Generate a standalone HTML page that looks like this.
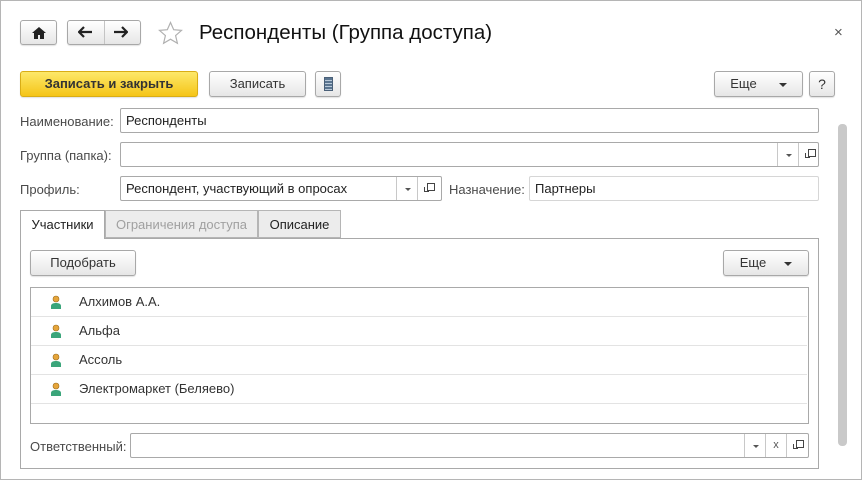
<!DOCTYPE html><html><head><meta charset="utf-8"><style>
*{box-sizing:border-box;margin:0;padding:0}
body{width:862px;height:480px;background:#fff;font-family:"Liberation Sans",Arial,sans-serif;font-size:13px;color:#333;position:relative;overflow:hidden}
.a{position:absolute}
.frame{left:0;top:0;width:862px;height:480px;border:1px solid #b5b5b5}
.btn{position:absolute;border:1px solid #a8a8a8;border-radius:3px;background:linear-gradient(#fff,#e6e6e6);box-shadow:0 1px 1px rgba(0,0,0,.12);text-align:center;color:#333;line-height:23px}
.fld{position:absolute;border:1px solid #a9a9a9;border-radius:2px;background:#fff;height:25px;line-height:23px;padding-left:5px;color:#222}
.lbl{position:absolute;color:#4a4a4a}
.dd{position:absolute;top:0;height:23px;border-left:1px solid #c8c8c8;width:21px}
.dd.arr:after{content:"";position:absolute;left:8px;top:11px;border:3px solid transparent;border-top:3px solid #555;border-bottom:0}
.cp:before{content:"";position:absolute;left:9px;top:6px;width:6px;height:6px;border:1px solid #444}
.cp:after{content:"";position:absolute;left:6px;top:10px;width:4px;height:4px;border-left:1px solid #444;border-bottom:1px solid #444}
.tri{display:inline-block;border:4px solid transparent;border-top:4px solid #333;border-bottom:0;vertical-align:middle;margin-left:22px}
.row{position:absolute;left:0;width:776px;height:29px;border-bottom:1px solid #e3e3e3;line-height:28px}
.row span{position:absolute;left:48px;color:#333}
.ic{position:absolute;left:20px;top:7px;width:10px;height:14px}
</style></head><body>
<div class="a frame"></div>
<div class="btn" style="left:20px;top:20px;width:37px;height:25px"><svg width="14" height="12" viewBox="0 0 14 12" style="margin-top:6px"><path d="M7 0L0 6h2v6h4V8h2v4h4V6h2z" fill="#222"/></svg></div>
<div class="btn" style="left:67px;top:20px;width:74px;height:25px"></div>
<div class="a" style="left:104px;top:21px;width:1px;height:23px;background:#c4c4c4"></div>
<svg class="a" style="left:78px;top:26px" width="15" height="12" viewBox="0 0 15 12"><path d="M1 6h13M6 1L1 6l5 5" stroke="#222" stroke-width="2.2" fill="none"/></svg>
<svg class="a" style="left:113px;top:26px" width="15" height="12" viewBox="0 0 15 12"><path d="M1 6h13M9 1l5 5-5 5" stroke="#222" stroke-width="2.2" fill="none"/></svg>
<svg class="a" style="left:158px;top:21px" width="25" height="24" viewBox="0 0 25 24"><path d="M12.5 1.5l3.2 7.2 7.8.7-5.9 5.2 1.8 7.7-6.9-4.1-6.9 4.1 1.8-7.7-5.9-5.2 7.8-.7z" fill="none" stroke="#b0b0b0" stroke-width="1.2"/></svg>
<div class="a" style="left:199px;top:21px;font-size:20.5px;color:#111">Респонденты (Группа доступа)</div>
<div class="a" style="left:834px;top:24px;font-size:15px;color:#555">×</div>
<div class="btn" style="left:20px;top:71px;width:178px;height:26px;background:linear-gradient(#fde86a,#f5c518);border-color:#d9ad16;font-weight:bold;line-height:24px">Записать и закрыть</div>
<div class="btn" style="left:209px;top:71px;width:97px;height:26px;line-height:24px">Записать</div>
<div class="btn" style="left:315px;top:71px;width:26px;height:26px"><div style="position:absolute;left:8px;top:5px;width:9px;height:14px;background:repeating-linear-gradient(#5a7590 0 2px,#b8c8d8 2px 3px);border:1px solid #4a6078"></div></div>
<div class="btn" style="left:714px;top:71px;width:89px;height:26px;line-height:24px">Еще<span class="tri"></span></div>
<div class="btn" style="left:809px;top:71px;width:26px;height:26px;line-height:24px;font-size:14px">?</div>
<div class="lbl" style="left:20px;top:114px">Наименование:</div>
<div class="fld" style="left:120px;top:108px;width:699px">Респонденты</div>
<div class="lbl" style="left:20px;top:148px">Группа (папка):</div>
<div class="fld" style="left:120px;top:142px;width:699px"><div class="dd arr" style="left:656px"></div><div class="dd cp" style="left:677px"></div></div>
<div class="lbl" style="left:20px;top:182px">Профиль:</div>
<div class="fld" style="left:120px;top:176px;width:322px">Респондент, участвующий в опросах<div class="dd arr" style="left:275px"></div><div class="dd cp" style="left:296px"></div></div>
<div class="lbl" style="left:449px;top:182px">Назначение:</div>
<div class="fld" style="left:529px;top:176px;width:290px;border-color:#d6d6d6">Партнеры</div>
<div class="a" style="left:838px;top:124px;width:9px;height:322px;background:#c9c9c9;border-radius:4px"></div>
<div class="a" style="left:20px;top:238px;width:799px;height:231px;border:1px solid #a9a9a9"></div>
<div class="a" style="left:20px;top:210px;width:85px;height:29px;border:1px solid #a9a9a9;border-bottom:none;background:#fff;line-height:28px;text-align:center;color:#222">Участники</div>
<div class="a" style="left:105px;top:210px;width:153px;height:28px;border:1px solid #b5b5b5;background:#ececec;line-height:27px;text-align:center;color:#a0a0a0">Ограничения доступа</div>
<div class="a" style="left:258px;top:210px;width:83px;height:28px;border:1px solid #b5b5b5;background:#ececec;line-height:27px;text-align:center;color:#222">Описание</div>
<div class="btn" style="left:30px;top:250px;width:106px;height:26px;line-height:24px">Подобрать</div>
<div class="btn" style="left:723px;top:250px;width:86px;height:26px;line-height:24px">Еще<span class="tri" style="margin-left:18px"></span></div>
<div class="a" style="left:30px;top:287px;width:779px;height:137px;border:1px solid #a9a9a9;overflow:hidden">
<div class="row" style="top:0"><svg class="ic" viewBox="0 0 10 14"><circle cx="5" cy="4" r="3" fill="#e6a53a" stroke="#9a6a1a" stroke-width=".6"/><path d="M0 14v-3c0-2 2-3 5-3s5 1 5 3v3z" fill="#3aa57a"/></svg><span>Алхимов А.А.</span></div>
<div class="row" style="top:29px"><svg class="ic" viewBox="0 0 10 14"><circle cx="5" cy="4" r="3" fill="#e6a53a" stroke="#9a6a1a" stroke-width=".6"/><path d="M0 14v-3c0-2 2-3 5-3s5 1 5 3v3z" fill="#3aa57a"/></svg><span>Альфа</span></div>
<div class="row" style="top:58px"><svg class="ic" viewBox="0 0 10 14"><circle cx="5" cy="4" r="3" fill="#e6a53a" stroke="#9a6a1a" stroke-width=".6"/><path d="M0 14v-3c0-2 2-3 5-3s5 1 5 3v3z" fill="#3aa57a"/></svg><span>Ассоль</span></div>
<div class="row" style="top:87px"><svg class="ic" viewBox="0 0 10 14"><circle cx="5" cy="4" r="3" fill="#e6a53a" stroke="#9a6a1a" stroke-width=".6"/><path d="M0 14v-3c0-2 2-3 5-3s5 1 5 3v3z" fill="#3aa57a"/></svg><span>Электромаркет (Беляево)</span></div>
</div>
<div class="lbl" style="left:30px;top:439px">Ответственный:</div>
<div class="fld" style="left:130px;top:433px;width:679px"><div class="dd arr" style="left:613px"></div><div class="dd" style="left:634px;text-align:center;font-size:11px;color:#555;line-height:22px">x</div><div class="dd cp" style="left:655px"></div></div>
</body></html>
